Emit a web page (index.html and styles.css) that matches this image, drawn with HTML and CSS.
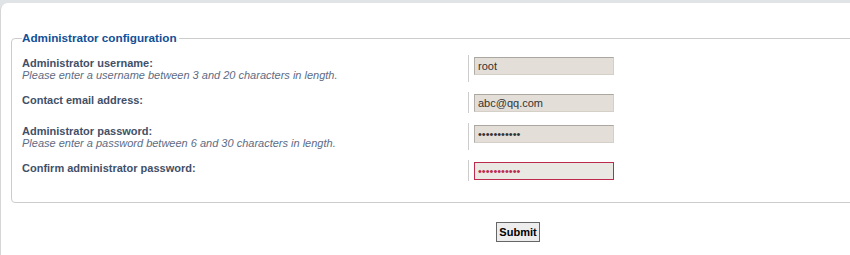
FILE: index.html
```html
<!DOCTYPE html>
<html lang="en">
<head>
    <meta charset="UTF-8">
    <title>Administrator configuration</title>
    <link rel="stylesheet" href="styles.css">
</head>
<body>
    <div class="panel">
        <form class="config-form">
            <fieldset class="config">
                <legend>Administrator configuration</legend>
                <dl>
                    <dt>
                        <label for="admin_name">Administrator username:</label>
                        <span class="explain">Please enter a username between 3 and 20 characters in length.</span>
                    </dt>
                    <dd><input class="inputbox" type="text" id="admin_name" value="root"></dd>
                </dl>
                <dl>
                    <dt><label for="board_email">Contact email address:</label></dt>
                    <dd><input class="inputbox" type="text" id="board_email" value="abc@qq.com"></dd>
                </dl>
                <dl>
                    <dt>
                        <label for="admin_pass1">Administrator password:</label>
                        <span class="explain">Please enter a password between 6 and 30 characters in length.</span>
                    </dt>
                    <dd><input class="inputbox" type="password" id="admin_pass1" value="abcdefghijk"></dd>
                </dl>
                <dl>
                    <dt><label for="admin_pass2">Confirm administrator password:</label></dt>
                    <dd><input class="inputbox error" type="password" id="admin_pass2" value="abcdefghijk"></dd>
                </dl>
            </fieldset>

            <div class="submit-buttons">
                <button type="button" class="button">Submit</button>
            </div>
        </form>
    </div>
</body>
</html>
```

FILE: styles.css
```css
body {
    margin: 0;
    padding: 3px 0 0;
    background: #e1e4e7;
    font-family: "Liberation Sans", Arial, sans-serif;
    font-size: 11px;
    overflow: hidden;
}

.panel {
    width: 1035px;
    min-height: 260px;
    background: #fff;
    border-left: 1px solid #d6d6d6;
    border-top-left-radius: 7px;
    padding: 28px 10px 0;
    box-sizing: border-box;
}

.config {
    margin: 0;
    padding: 10px 10px 11px;
    border: 1px solid #cccccc;
    border-radius: 4px;
    width: 1100px;
    box-sizing: border-box;
}

.config legend {
    padding: 0 2px 0 0;
    font-weight: bold;
    font-size: 11.7px;
    line-height: 14px;
    color: #115098;
}

.config dl {
    display: flex;
    margin: 0 0 10px;
}

.config dt {
    width: 446px;
    padding: 2px 0 1px;
    line-height: 12px;
}

.config dt label {
    display: block;
    font-weight: bold;
    color: #425067;
}

.explain {
    display: block;
    font-style: italic;
    color: #5d6c84;
}

.config dd {
    margin: 0;
    padding: 2px 0 1px 5px;
    border-left: 1px solid #cccccc;
}

.inputbox {
    display: block;
    width: 140px;
    height: 18px;
    box-sizing: border-box;
    margin: 0;
    padding: 0 3px;
    border: 1px solid #d4d0c8;
    border-top-color: #aaa6a0;
    border-left-color: #b2aea7;
    background: #e3dfd8;
    font-family: "Liberation Sans", Arial, sans-serif;
    font-size: 11px;
    color: #333;
}

.inputbox.error {
    border-color: #bc2a4d;
    background: #e9e8e2;
    color: #bc2a4d;
}

.submit-buttons {
    text-align: center;
    padding-top: 19px;
}

.button {
    height: 20px;
    padding: 0 2px;
    border: 1px solid #666;
    background: #ededed;
    font-family: "Liberation Sans", Arial, sans-serif;
    font-size: 11px;
    font-weight: bold;
    color: #000;
}
```
